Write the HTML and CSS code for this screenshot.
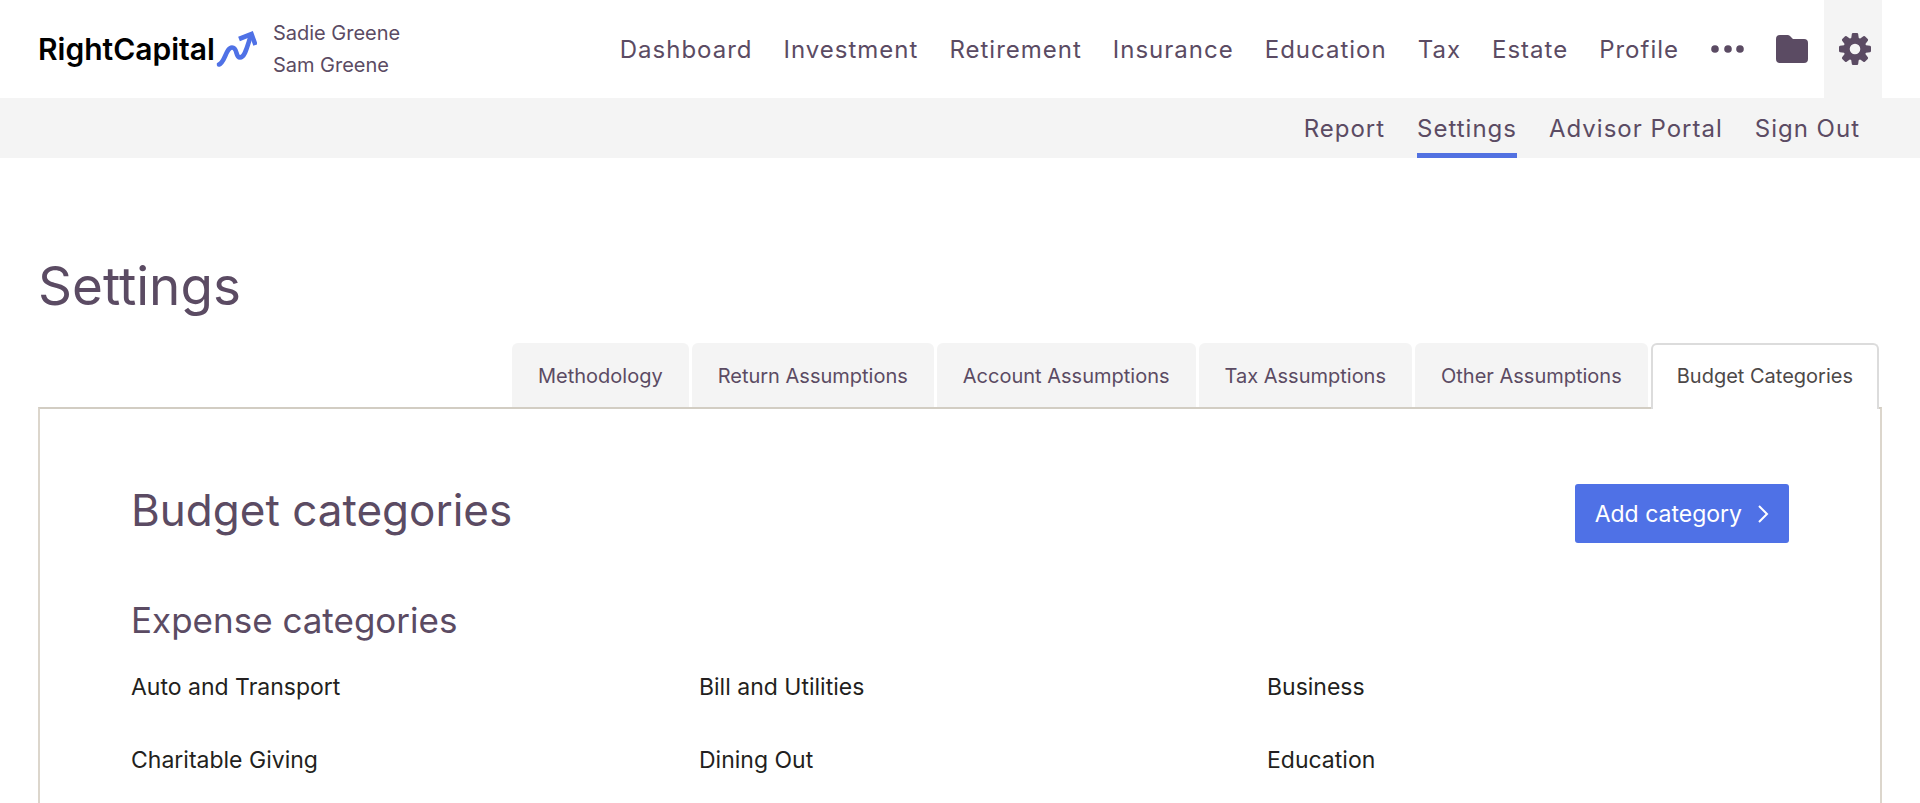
FILE: index.html
```
<!DOCTYPE html>
<html lang="en">
<head>
  <meta charset="UTF-8">
  <meta name="viewport" content="width=device-width, initial-scale=1.0">
  <title>Settings - RightCapital</title>
  <link rel="stylesheet" href="styles.css">
</head>
<body>
  <header class="header">
    <a class="logo" href="#">
      <span class="logo-text">RightCapital</span>
      <svg class="logo-arrow" viewBox="0 0 42 38" fill="none" stroke="#4f71e6" stroke-width="4.600">
        <path d="M4 34.500C10 32.500 11 17.500 17 17.500S20 27.500 25 27.500S32 17 36 5" stroke-linecap="round" stroke-linejoin="round"/>
        <path d="M24 9L36.500 4L40.500 15"/>
      </svg>
    </a>
    <div class="clients">
      <div>Sadie Greene</div>
      <div>Sam Greene</div>
    </div>
    <nav class="nav">
      <a href="#">Dashboard</a>
      <a href="#">Investment</a>
      <a href="#">Retirement</a>
      <a href="#">Insurance</a>
      <a href="#">Education</a>
      <a href="#">Tax</a>
      <a href="#">Estate</a>
      <a href="#">Profile</a>
      <button class="icon-btn" aria-label="More">
        <svg width="34" height="34" viewBox="0 0 34 34" fill="currentColor">
          <circle cx="5" cy="17" r="3.800"/>
          <circle cx="18" cy="17" r="3.800"/>
          <circle cx="30" cy="17" r="3.800"/>
        </svg>
      </button>
      <button class="icon-btn" aria-label="Documents">
        <svg width="34" height="30" viewBox="0 0 34 30" fill="currentColor">
          <path d="M5 1H12.500Q14 1 15 2L18 5H29Q33 5 33 9V25Q33 29 29 29H5Q1 29 1 25V5Q1 1 5 1Z"/>
        </svg>
      </button>
      <button class="icon-btn icon-btn-active" aria-label="Settings menu">
        <svg width="34" height="34" viewBox="0 0 34 34" fill="currentColor">
          <path fill-rule="evenodd" d="M17 5.500a11.500 11.500 0 1 0 0 23a11.500 11.500 0 1 0 0-23ZM17 11.700a5.300 5.300 0 1 1 0 10.600a5.300 5.300 0 1 1 0-10.600Z"/>
          <g id="teeth">
            <path id="tooth" d="M13 8L13.800 2Q14 1 15 1H19Q20 1 20.200 2L21 8Z"/>
            <use href="#tooth" transform="rotate(45 17 17)"/>
            <use href="#tooth" transform="rotate(90 17 17)"/>
            <use href="#tooth" transform="rotate(135 17 17)"/>
          </g>
          <use href="#teeth" transform="rotate(180 17 17)"/>
        </svg>
      </button>
    </nav>
  </header>

  <nav class="subnav">
    <a href="#">Report</a>
    <a href="#" class="active">Settings</a>
    <a href="#">Advisor Portal</a>
    <a href="#">Sign Out</a>
  </nav>

  <main class="page">
    <h1>Settings</h1>
    <div class="tabs" role="tablist">
      <button class="tab" role="tab">Methodology</button>
      <button class="tab" role="tab">Return Assumptions</button>
      <button class="tab" role="tab">Account Assumptions</button>
      <button class="tab" role="tab">Tax Assumptions</button>
      <button class="tab" role="tab">Other Assumptions</button>
      <button class="tab tab-active" role="tab" aria-selected="true">Budget Categories</button>
    </div>
    <section class="panel">
      <div class="panel-head">
        <h2>Budget categories</h2>
        <button class="add-btn">
          Add category
          <svg width="12" height="20" viewBox="0 0 12 20" fill="none" stroke="currentColor" stroke-width="2">
            <path d="M2 2L10 10L2 18"/>
          </svg>
        </button>
      </div>
      <h3>Expense categories</h3>
      <ul class="categories">
        <li>Auto and Transport</li>
        <li>Bill and Utilities</li>
        <li>Business</li>
        <li>Charitable Giving</li>
        <li>Dining Out</li>
        <li>Education</li>
      </ul>
    </section>
  </main>
</body>
</html>
```

FILE: styles.css
```
* {
  box-sizing: border-box;
}
body {
  display: flex;
  flex-direction: column;
  min-height: 100vh;
  margin: 0;
  font-family: Inter, "Liberation Sans", sans-serif;
  font-size: 23px;
  line-height: 32px;
  color: #231f20;
  background: #fff;
}
a {
  color: inherit;
  text-decoration: none;
}
button {
  font: inherit;
  color: inherit;
  border: none;
  background: none;
  padding: 0;
  cursor: pointer;
}
svg {
  display: block;
}

/* Header */
.header {
  display: flex;
  align-items: center;
  height: 98px;
  padding: 0 38px;
  color: #5b4b63;
}
.logo {
  display: flex;
  align-items: center;
}
.logo-text {
  font-size: 30px;
  font-weight: 600;
  color: #000;
}
.logo-arrow {
  width: 42px;
  height: 38px;
}
.clients {
  margin-left: 16px;
  font-size: 20px;
}
.nav {
  display: flex;
  align-items: center;
  gap: 31px;
  height: 100%;
  margin-left: auto;
  font-size: 24px;
  letter-spacing: 1px;
}
.nav a {
  padding-top: 2px;
}
.icon-btn-active {
  height: 100%;
  margin-left: -16px;
  padding: 0 10px 0 14px;
  background: #f4f4f4;
}

/* Secondary navigation */
.subnav {
  display: flex;
  justify-content: flex-end;
  gap: 32px;
  height: 60px;
  padding: 0 60px;
  font-size: 24px;
  line-height: 62px;
  letter-spacing: 1px;
  color: #5b4b63;
  background: #f4f4f4;
}
.subnav .active {
  border-bottom: 5px solid #5271e1;
}

/* Page */
.page {
  display: flex;
  flex: 1;
  flex-direction: column;
  padding: 96px 38px 0;
}
h1, h2, h3 {
  margin: 0;
  font-weight: 400;
  color: #5b4b63;
}
h1 {
  font-size: 53px;
  line-height: 64px;
}
.tabs {
  display: flex;
  justify-content: flex-end;
  gap: 3px;
  margin-top: 25px;
  padding-right: 3px;
}
.tab {
  height: 64px;
  padding: 2px 26px 0;
  border-radius: 6px 6px 0 0;
  font-size: 20px;
  color: #5b4b63;
  background: #f4f4f4;
}
.tab-active {
  height: 66px;
  margin-bottom: -2px;
  padding: 0 24px 2px;
  border: 2px solid #dcdcdc;
  border-bottom: none;
  color: #4d4848;
  background: #fff;
  z-index: 1;
}
.panel {
  flex: 1;
  padding: 75px 91px 32px;
  border: 2px solid #dcd6cc;
  border-top-color: #d2cdc3;
  border-bottom: none;
}
.panel-head {
  display: flex;
  align-items: flex-start;
  justify-content: space-between;
}
h2 {
  font-size: 44px;
  line-height: 52px;
}
.add-btn {
  display: flex;
  align-items: center;
  gap: 15px;
  height: 59px;
  padding: 0 20px;
  border-radius: 3px;
  color: #fff;
  background: #4f71e6;
}
h3 {
  margin-top: 57px;
  font-size: 35px;
  line-height: 40px;
}
.categories {
  display: grid;
  grid-template-columns: repeat(3, 1fr);
  gap: 41px 46px;
  margin: 31px 0 0;
  padding: 0;
  list-style: none;
}
```
